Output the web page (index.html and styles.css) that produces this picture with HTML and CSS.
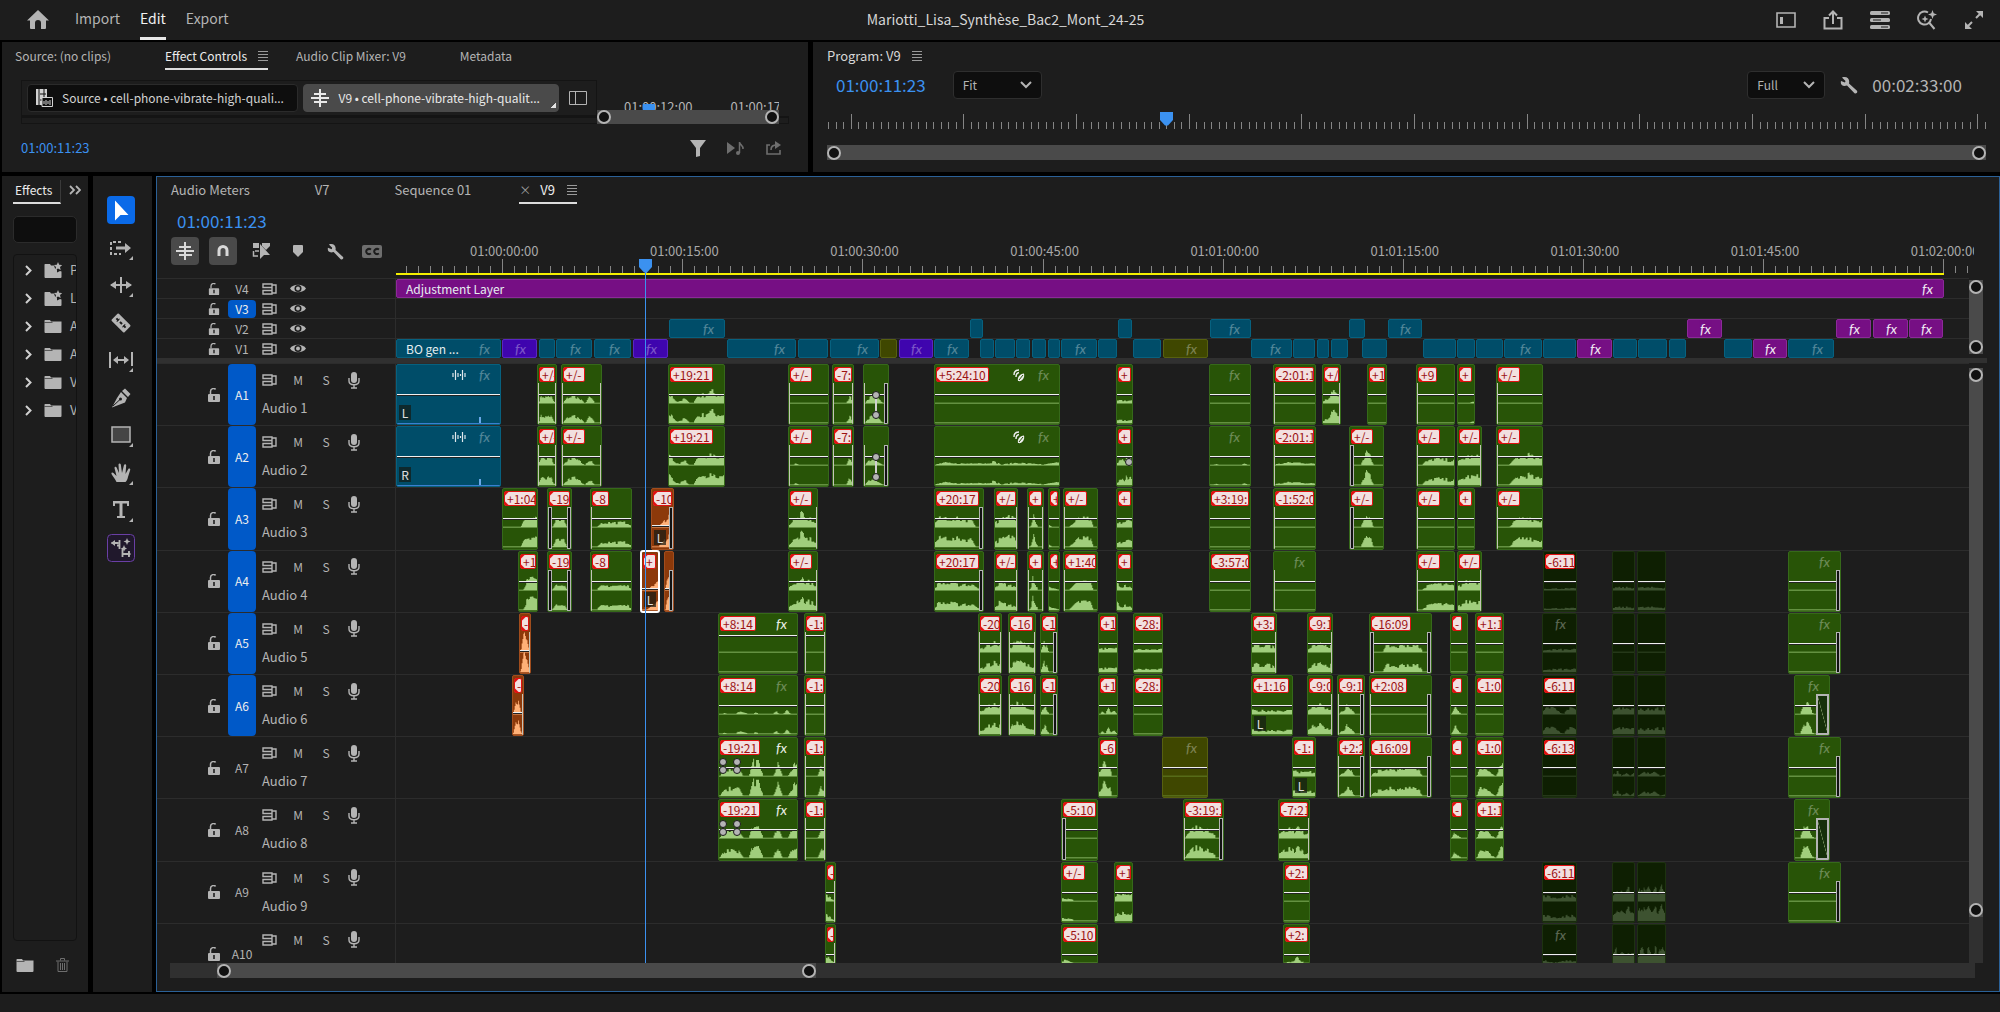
FILE: index.html
```html
<!DOCTYPE html>
<html lang="en">
<head>
<meta charset="utf-8">
<title>Mariotti_Lisa_Synthèse_Bac2_Mont_24-25</title>
<link rel="stylesheet" href="styles.css">
</head>
<body>
<svg class="sprite" aria-hidden="true">
  <symbol id="i-menu" viewBox="0 0 10 10"><path d="M0 .5h10M0 3.5h10M0 6.5h10M0 9.5h10" stroke="currentColor" fill="none"/></symbol>
  <symbol id="i-home" viewBox="0 0 22 20"><path d="M11 0 22 10.500h-3V18a1 1 0 0 1-1 1h-4v-6a3 3 0 0 0-6 0v6H4a1 1 0 0 1-1-1v-7.500H0z" fill="currentColor"/></symbol>
  <symbol id="i-workspace" viewBox="0 0 20 16"><path d="M1 1h18v14H1z" fill="none" stroke="currentColor" stroke-width="1.600"/><path d="M4 5h3v7H4z" fill="currentColor"/></symbol>
  <symbol id="i-share" viewBox="0 0 20 20"><path d="M6 8H1.500v10.500h17V8H14M10 14V2M6 5.500 10 1.500l4 4" fill="none" stroke="currentColor" stroke-width="2"/></symbol>
  <symbol id="i-list" viewBox="0 0 20 18"><rect width="20" height="4" rx="1.500" fill="currentColor"/><rect y="7" width="20" height="4" rx="1.500" fill="currentColor"/><rect y="14" width="20" height="4" rx="1.500" fill="currentColor"/><path d="M11 2h7M3 9h8M11 16h7" stroke="#1d1d1d"/></symbol>
  <symbol id="i-search" viewBox="0 0 20 20"><path d="M11 2.500A6.500 6.500 0 1 0 14 9M12.500 13l5 6" fill="none" stroke="currentColor" stroke-width="2"/><path d="m15.500 0 1.200 3.300L20 4.500l-3.300 1.200L15.500 9l-1.200-3.300L11 4.500l3.300-1.200zM8 5.500 9 8l2.500 1L9 10l-1 2.500L7 10 4.500 9 7 8z" fill="currentColor"/></symbol>
  <symbol id="i-expand" viewBox="0 0 20 20"><path d="M12 8 17 3M8 12l-5 5" fill="none" stroke="currentColor" stroke-width="2"/><path d="M12 1h7v7zM8 19H1v-7z" fill="currentColor"/></symbol>
  <symbol id="i-clip" viewBox="0 0 18 18"><path d="M1 0h11v8H8v8H1z" fill="currentColor"/><path d="M4 0v16M9 0v8M5 5h6M5 11h3" stroke="#0e0e0e"/><path d="M7 8.500h10.500v9H7z" fill="#0e0e0e" stroke="currentColor"/><path d="M9 12v3M11 11v5M13 12v3M15 11v5" stroke="currentColor"/></symbol>
  <symbol id="i-nest" viewBox="0 0 18 18"><path d="M9 0v18M3 5h5M0 9h8M3 13h5M10 5h5M10 9h8M10 13h6" stroke="currentColor" stroke-width="2" fill="none"/></symbol>
  <symbol id="i-panel" viewBox="0 0 18 14"><path d="M.5.500h17v13H.5zM6.500.500v13" fill="none" stroke="currentColor"/></symbol>
  <symbol id="i-funnel" viewBox="0 0 16 17"><path d="M0 0h16L10 8v8l-4 1V8z" fill="currentColor"/></symbol>
  <symbol id="i-playnote" viewBox="0 0 18 14"><path d="M0 1l8 6-8 6z" fill="currentColor"/><path d="M12.500 12V1c0 3 4 3 3.500 7" fill="none" stroke="currentColor" stroke-width="1.500"/><circle cx="11" cy="12" r="2" fill="currentColor"/></symbol>
  <symbol id="i-export" viewBox="0 0 16 14"><path d="M4 4H1v9h13V9M5 9c0-4 2-5 6-5" fill="none" stroke="currentColor" stroke-width="1.600"/><path d="M9 0l6 4-6 4z" fill="currentColor"/></symbol>
  <symbol id="i-wrench" viewBox="0 0 18 18"><path d="M2 1.500 5.500 5 5 6.500 1 5C0 9 3 11 7 9.500l7.500 7.700c1.500 1 3.500-.7 2.500-2.400L9 7.500C10 3 7 0 2 1.500z" fill="currentColor"/></symbol>
  <symbol id="i-chev" viewBox="0 0 12 8"><path d="M1 1l5 5 5-5" fill="none" stroke="currentColor" stroke-width="2"/></symbol>
  <symbol id="i-right" viewBox="0 0 7 11"><path d="M1 1l4.500 4.500L1 10" fill="none" stroke="currentColor" stroke-width="2"/></symbol>
  <symbol id="i-double" viewBox="0 0 12 10"><path d="M1 1l4 4-4 4M7 1l4 4-4 4" fill="none" stroke="currentColor" stroke-width="1.800"/></symbol>
  <symbol id="i-folder" viewBox="0 0 18 14"><path d="M1 1h5l1 1.500h10.500V13a1 1 0 0 1-1 1h-15a1 1 0 0 1-1-1V1.500z" fill="currentColor"/><path d="M.5 3.500h8" stroke="#1d1d1d" stroke-width=".6"/></symbol>
  <symbol id="i-folderstar" viewBox="0 0 18 16"><path d="M1 2h5l1 1.500h3l1 3 2 1v3l3-1.500 1.500.5V15a1 1 0 0 1-1 1h-15a1 1 0 0 1-1-1V2.500z" fill="currentColor"/><path d="M14 0l1.200 2.800 3 .2-2.200 2 .7 3L14 6.400 11.300 8l.7-3-2.200-2 3-.2z" fill="currentColor"/></symbol>
  <symbol id="i-trash" viewBox="0 0 13 14"><path d="M0 3h13M4.500 2.500v-2h4v2M2 3.500v10h9v-10M4.500 5v7M6.500 5v7M8.500 5v7" fill="none" stroke="currentColor"/></symbol>
  <symbol id="i-arrow" viewBox="0 0 28 28"><path d="M8 4.500v20l5.500-5.500H21.500z" fill="#fff"/></symbol>
  <symbol id="i-trackfwd" viewBox="0 0 28 28"><path d="M14 8H4v12h10" fill="none" stroke="currentColor" stroke-width="2" stroke-dasharray="3 2"/><path d="M9 12.500h9V9l6 5-6 5v-3.500H9z" fill="currentColor"/><path d="M26 22v4h-4z" fill="currentColor"/></symbol>
  <symbol id="i-ripple" viewBox="0 0 28 28"><path d="M14 6v16M4 14h20" stroke="currentColor" stroke-width="2"/><path d="M3 14l6-4v8zM25 14l-6-4v8zM26 22v4h-4z" fill="currentColor"/></symbol>
  <symbol id="i-razor" viewBox="0 0 28 28"><g transform="rotate(45 14 14)"><rect x="5" y="9" width="18" height="10" rx="1" fill="currentColor"/><path d="M7.500 14h3m2 0h3m2 0h3" stroke="#1d1d1d" stroke-width="2"/><path d="M10 12v4M18 12v4" stroke="#1d1d1d"/></g></symbol>
  <symbol id="i-slip" viewBox="0 0 28 28"><path d="M3 6v16M25 6v14M7 14h14" stroke="currentColor" stroke-width="2"/><path d="M6 14l5-4v8zM22 14l-5-4v8zM26 22v4h-4z" fill="currentColor"/></symbol>
  <symbol id="i-pen" viewBox="0 0 28 28"><path d="M18 4.500 23.500 10l-2.500 3-6-6zM14 8l6 6-2 4.500-13 5L10 14z" fill="currentColor"/><path d="M6 22l7-6.500" stroke="#1d1d1d"/><circle cx="13.500" cy="15" r="1.500" fill="#1d1d1d"/></symbol>
  <symbol id="i-rect" viewBox="0 0 28 28"><path d="M5 6h18v15H5z" fill="#454545" stroke="currentColor" stroke-width="1.500"/><path d="M26 22v4h-4z" fill="currentColor"/></symbol>
  <symbol id="i-hand" viewBox="0 0 28 28"><path d="M9.500 23C8 20 6 17.500 4.500 15c-.5-1.500 1-2 2-1l3 3L7.500 9c0-1.500 1.700-1.700 2.200-.3L12 14l-.5-8.500c.2-1.400 2-1.400 2.300 0L15 14l2-8c.5-1.200 2.200-.9 2.200.5L18.500 15l2.800-5c.9-1 2.300-.3 1.900 1L21 18c-.7 3-1.500 4-2.500 5z" fill="currentColor"/><path d="M26 22v4h-4z" fill="currentColor"/></symbol>
  <symbol id="i-type" viewBox="0 0 28 28"><path d="M6 5h16v5h-2V7.500h-4.500V20H18v2h-8v-2h2.500V7.500H8V10H6z" fill="currentColor"/><path d="M26 22v4h-4z" fill="currentColor"/></symbol>
  <symbol id="i-remix" viewBox="0 0 28 28"><rect x=".5" y=".5" width="27" height="27" rx="4" fill="#20182c" stroke="#6a3fa5"/><path d="M4.500 9h7M12.500 6v9M15.500 14v9M10 11.500h3M16 20h6M22 17v6" stroke="currentColor" stroke-width="1.800"/><path d="M4 9l4-3v6zM24 20l-3-3v6zM20 4l1 2.500 2.500 1L21 8.500 20 11l-1-2.500-2.500-1 2.500-1zM17 11l1 2.500 2 1-2 1-1 2-1-2-2-1 2-1z" fill="currentColor"/></symbol>
  <symbol id="i-magnet" viewBox="0 0 18 18"><path d="M5 14V8.500a4 4 0 0 1 8 0V14" fill="none" stroke="currentColor" stroke-width="3"/></symbol>
  <symbol id="i-linked" viewBox="0 0 18 18"><path d="M1 1h6v5H1zM10 1h8v3l-4 4-4-4z" fill="currentColor"/><path d="M1.500 9v5H6M3 9h4" fill="none" stroke="currentColor" stroke-width="1.500"/><path d="M8 2v15l4-4h6z" fill="currentColor"/></symbol>
  <symbol id="i-marker" viewBox="0 0 10 12"><path d="M0 1a1 1 0 0 1 1-1h8a1 1 0 0 1 1 1v6l-5 5-5-5z" fill="currentColor"/></symbol>
  <symbol id="i-cc" viewBox="0 0 20 13"><rect width="20" height="13" rx="2" fill="currentColor"/><path d="M9 4.500a3 2.500 0 1 0 0 4M17 4.500a3 2.500 0 1 0 0 4" fill="none" stroke="#1d1d1d" stroke-width="2"/></symbol>
  <symbol id="i-lock" viewBox="0 0 12 14"><rect y="6" width="12" height="8" rx="1" fill="currentColor"/><path d="M2.500 6V3.500C2.500 0 7 0 7.500 1.500" fill="none" stroke="currentColor" stroke-width="1.500"/><path d="M6 8v4" stroke="#1d1d1d" stroke-width="1.600"/></symbol>
  <symbol id="i-sync" viewBox="0 0 15 12"><path d="M1 1h9v3.500H1zM1 7.500h9V11H1zM10 2h4v8h-4M10 4.500v3" fill="none" stroke="currentColor" stroke-width="1.400"/></symbol>
  <symbol id="i-eye" viewBox="0 0 16 11"><path d="M0 5.500C3 .5 13 .5 16 5.500 13 10.500 3 10.500 0 5.500z" fill="currentColor"/><circle cx="8" cy="5.500" r="3.500" fill="#1d1d1d"/><circle cx="8" cy="5.500" r="2" fill="currentColor"/></symbol>
  <symbol id="i-mic" viewBox="0 0 12 17"><rect x="3" width="6" height="11" rx="3" fill="currentColor"/><path d="M1 6v3c0 5 10 5 10 0V6M6 13v3M3 16h6" fill="none" stroke="currentColor" stroke-width="1.400"/></symbol>
  <symbol id="i-head" viewBox="0 0 13 15"><path d="M0 1h13v8l-5 5.500H5L0 9z" fill="#3b91f0"/></symbol>
  <symbol id="i-wave" viewBox="0 0 14 12"><path d="M1 4v4M3.500 1v10M6 4v4M8.500 5v2M10.500 1v10M13 4v4" stroke="#dfe8ec" stroke-width="1.200"/></symbol>
  <symbol id="i-leaf" viewBox="0 0 12 13"><path d="M5 12C4 8 7 5 11 4.500 12 9 9 13 5 12z" fill="#eee"/><path d="M6 11l4-5" stroke="#285407"/><path d="M1 6c0-3 2-5 5-5M3 8c0-3 1-4 3-4.500" fill="none" stroke="#eee" stroke-width="1.400"/></symbol>
</svg>

<header class="app-bar">
  <nav class="app-nav">
    <button class="icon-btn" aria-label="Home"><svg width="22" height="20"><use href="#i-home"/></svg></button>
    <a href="#import">Import</a><a href="#edit" class="on">Edit</a><a href="#export">Export</a>
  </nav>
  <h1>Mariotti_Lisa_Synthèse_Bac2_Mont_24-25</h1>
  <div class="app-tools">
    <button class="icon-btn" aria-label="Workspaces"><svg width="20" height="16"><use href="#i-workspace"/></svg></button>
    <button class="icon-btn" aria-label="Quick export"><svg width="20" height="20"><use href="#i-share"/></svg></button>
    <button class="icon-btn" aria-label="Progress"><svg width="20" height="18"><use href="#i-list"/></svg></button>
    <button class="icon-btn" aria-label="Search"><svg width="20" height="20"><use href="#i-search"/></svg></button>
    <button class="icon-btn" aria-label="Full screen"><svg width="20" height="20"><use href="#i-expand"/></svg></button>
  </div>
</header>

<main>
  <div class="upper">
    <section class="panel controls">
      <nav class="tabs controls-tabs">
        <a href="#source">Source: (no clips)</a>
        <a href="#effects" class="on">Effect Controls <svg width="10" height="10"><use href="#i-menu"/></svg></a>
        <a href="#mixer">Audio Clip Mixer: V9</a>
        <a href="#metadata">Metadata</a>
      </nav>
      <div class="clip-head">
        <div class="clip-pick">
          <button class="pick"><svg width="18" height="18"><use href="#i-clip"/></svg>Source • cell-phone-vibrate-high-quali...</button>
          <button class="pick on"><svg width="18" height="18"><use href="#i-nest"/></svg>V9 • cell-phone-vibrate-high-qualit...</button>
          <button class="icon-btn" aria-label="Toggle timeline"><svg width="18" height="14"><use href="#i-panel"/></svg></button>
        </div>
        <div class="mini-ruler">
          <div class="mini-times"><span>01:00:12:00</span><span>01:00:17:00</span><i></i></div>
          <div class="zoombar"><i></i><i></i></div>
        </div>
        <div class="strip"></div>
      </div>
      <div class="controls-foot">
        <span class="tc small">01:00:11:23</span>
        <button class="icon-btn" aria-label="Filter"><svg width="16" height="17"><use href="#i-funnel"/></svg></button>
        <button class="icon-btn dim" aria-label="Play audio only"><svg width="18" height="14"><use href="#i-playnote"/></svg></button>
        <button class="icon-btn dim" aria-label="Export clip"><svg width="16" height="14"><use href="#i-export"/></svg></button>
      </div>
    </section>

    <section class="panel program">
      <nav class="tabs"><a href="#program" class="bright">Program: V9 <svg width="10" height="10"><use href="#i-menu"/></svg></a></nav>
      <div class="program-row">
        <span class="tc">01:00:11:23</span>
        <span class="drop fit"><select aria-label="Zoom level"><option>Fit</option></select><svg width="12" height="8"><use href="#i-chev"/></svg></span>
        <span class="drop full"><select aria-label="Playback resolution"><option>Full</option></select><svg width="12" height="8"><use href="#i-chev"/></svg></span>
        <button class="icon-btn" aria-label="Settings"><svg width="18" height="18"><use href="#i-wrench"/></svg></button>
        <span class="tc grey">00:02:33:00</span>
      </div>
      <div class="program-ruler" id="program-ruler"><svg class="head" width="13" height="15"><use href="#i-head"/></svg></div>
      <div class="zoombar"><i></i><i></i></div>
    </section>
  </div>

  <div class="lower">
    <section class="panel effects">
      <nav class="effects-tabs"><a href="#fx">Effects</a><button class="icon-btn" aria-label="More panels"><svg width="12" height="10"><use href="#i-double"/></svg></button></nav>
      <input class="search" type="text" aria-label="Search effects">
      <ul class="bins">
        <li><svg width="7" height="11"><use href="#i-right"/></svg><svg width="18" height="16"><use href="#i-folderstar"/></svg>Presets</li>
        <li><svg width="7" height="11"><use href="#i-right"/></svg><svg width="18" height="16"><use href="#i-folderstar"/></svg>Lumetri Presets</li>
        <li><svg width="7" height="11"><use href="#i-right"/></svg><svg width="18" height="14"><use href="#i-folder"/></svg>Audio Effects</li>
        <li><svg width="7" height="11"><use href="#i-right"/></svg><svg width="18" height="14"><use href="#i-folder"/></svg>Audio Transitions</li>
        <li><svg width="7" height="11"><use href="#i-right"/></svg><svg width="18" height="14"><use href="#i-folder"/></svg>Video Effects</li>
        <li><svg width="7" height="11"><use href="#i-right"/></svg><svg width="18" height="14"><use href="#i-folder"/></svg>Video Transitions</li>
      </ul>
      <div class="effects-foot">
        <button class="icon-btn" aria-label="New bin"><svg width="18" height="14"><use href="#i-folder"/></svg></button>
        <button class="icon-btn dim" aria-label="Delete"><svg width="13" height="14"><use href="#i-trash"/></svg></button>
      </div>
    </section>

    <section class="panel tools">
      <div class="tool-list">
        <button class="tool on" aria-label="Selection"><svg><use href="#i-arrow"/></svg></button>
        <button class="tool" aria-label="Track select forward"><svg><use href="#i-trackfwd"/></svg></button>
        <button class="tool" aria-label="Ripple edit"><svg><use href="#i-ripple"/></svg></button>
        <button class="tool" aria-label="Razor"><svg><use href="#i-razor"/></svg></button>
        <button class="tool" aria-label="Slip"><svg><use href="#i-slip"/></svg></button>
        <button class="tool" aria-label="Pen"><svg><use href="#i-pen"/></svg></button>
        <button class="tool" aria-label="Rectangle"><svg><use href="#i-rect"/></svg></button>
        <button class="tool" aria-label="Hand"><svg><use href="#i-hand"/></svg></button>
        <button class="tool" aria-label="Type"><svg><use href="#i-type"/></svg></button>
        <button class="tool" aria-label="Generative extend"><svg><use href="#i-remix"/></svg></button>
      </div>
    </section>

    <section class="panel timeline">
      <nav class="tabs timeline-tabs">
        <a href="#meters">Audio Meters</a>
        <a href="#v7">V7</a>
        <a href="#seq1">Sequence 01</a>
        <a href="#v9" class="on"><span class="close">×</span> V9 <svg width="10" height="10"><use href="#i-menu"/></svg></a>
      </nav>
      <div class="sequence">
        <div class="seq-top">
          <div class="seq-tools">
            <span class="tc">01:00:11:23</span>
            <div class="toggles">
              <button class="toggle on" aria-label="Nest"><svg width="18" height="18"><use href="#i-nest"/></svg></button>
              <button class="toggle on" aria-label="Snap"><svg width="18" height="18"><use href="#i-magnet"/></svg></button>
              <button class="toggle" aria-label="Linked selection"><svg width="18" height="18"><use href="#i-linked"/></svg></button>
              <button class="toggle" aria-label="Add marker"><svg width="10" height="12"><use href="#i-marker"/></svg></button>
              <button class="toggle" aria-label="Timeline settings"><svg width="17" height="17"><use href="#i-wrench"/></svg></button>
              <button class="toggle dim" aria-label="Captions"><svg width="20" height="13"><use href="#i-cc"/></svg></button>
            </div>
          </div>
          <div class="ruler"><div class="ruler-scale" id="ruler"></div></div>
        </div>
        <div class="group video">
          <div class="tracks" id="video"></div>
          <div class="vbar"><i></i><i></i></div>
        </div>
        <div class="divider"></div>
        <div class="group audio">
          <div class="tracks" id="audio"></div>
          <div class="vbar long"><div class="thumb"><i></i><i></i></div></div>
        </div>
        <div class="overlay"><div class="playhead" id="playhead"><svg width="13" height="15"><use href="#i-head"/></svg></div></div>
      </div>
      <div class="hbar"><div class="zoombar"><i></i><i></i></div></div>
    </section>
  </div>
</main>
<footer class="status"></footer>
<script src="app.js"></script>
</body>
</html>
```
FILE: styles.css
```css
* { box-sizing: border-box; }
html, body { height: 100%; }
body {
  margin: 0;
  background: #000;
  color: #b4b4b4;
  font: 13px/16px "Noto Sans CJK JP", "Open Sans", sans-serif;
  display: flex;
  flex-direction: column;
  gap: 2px;
  overflow: hidden;
}
button, select, input { font: inherit; color: inherit; margin: 0; }
button { border: 0; background: none; padding: 0; }
a { color: inherit; text-decoration: none; }
svg { display: block; flex: none; }
.sprite { position: absolute; width: 0; height: 0; }
.icon-btn { display: grid; place-items: center; }
.dim { color: #6e6e6e; }

.app-bar {
  flex: none;
  height: 40px;
  background: #1d1d1d;
  display: grid;
  grid-template-columns: 1fr auto 1fr;
  align-items: stretch;
  padding: 0 16px 0 27px;
  font-size: 14px;
}
.app-nav { display: flex; gap: 20px; }
.app-nav .icon-btn { width: 22px; margin-right: 6px; }
.app-nav a { line-height: 37px; border-bottom: 3px solid transparent; }
.app-nav a.on { color: #f2f2f2; border-color: #e6e6e6; }
.app-bar h1 { margin: 0; font-size: 14px; font-weight: 400; line-height: 39px; color: #d6d6d6; }
.app-tools { display: flex; justify-content: flex-end; gap: 27px; }

main { flex: 1; min-height: 0; display: flex; flex-direction: column; gap: 4px; }
.panel { background: #1d1d1d; min-width: 0; }
.upper { flex: none; display: grid; grid-template-columns: 806fr 1187fr; gap: 5px; padding-left: 2px; height: 130px; }
.tabs { display: flex; align-items: flex-start; }
.tabs a { display: flex; align-items: center; gap: 11px; line-height: 24px; border-bottom: 2px solid transparent; white-space: nowrap; }
.tabs a.on { color: #ececec; border-color: #dcdcdc; }
.tabs a.bright { color: #d6d6d6; }
.tabs svg { color: #9a9a9a; }

.controls { padding: 2px 19px 0; }
.controls-tabs { margin-left: -6px; height: 36px; gap: 54px; font-size: 12px; }
.controls-tabs a:nth-child(2) { margin-right: -26px; }
.clip-head { display: grid; grid-template-columns: 576px minmax(0, 1fr) 10px; grid-template-rows: 36px 8px; }
.clip-pick { grid-area: 1 / 1; border: 1px solid #141414; display: flex; align-items: center; gap: 5px; padding: 0 9px 0 5px; }
.pick {
  height: 28px;
  width: 272px;
  border-radius: 4px;
  background: #0e0e0e;
  border: 1px solid #2b2b2b;
  color: #d2d2d2;
  display: flex;
  align-items: center;
  gap: 9px;
  padding-left: 7px;
  white-space: nowrap;
  font-size: 12px;
}
.pick.on { width: 256px; background: linear-gradient(135deg, transparent 50%, #e2e2e2 50%) no-repeat right 2px bottom 3px / 6px 6px #4a4a4a; border-color: #4a4a4a; color: #e8e8e8; }
.clip-pick .icon-btn { margin-left: 5px; }
.mini-ruler { grid-area: 1 / 2 / 3 / 3; z-index: 1; }
.mini-times { position: relative; height: 30px; padding: 19px 0 0 27px; display: flex; gap: 38px; overflow: hidden; font-size: 13px; }
.mini-times i { position: absolute; left: 46px; bottom: 0; width: 12px; height: 6px; background: #3b91f0; }
.strip { grid-area: 2 / 1 / 3 / 4; border: 1px solid #141414; border-top-width: 2px; }
.zoombar { height: 14px; background: #4a4a4a; display: flex; justify-content: space-between; align-items: center; }
.zoombar i, .vbar i { width: 14px; height: 14px; border-radius: 50%; background: #111; border: 2px solid #b4b4b4; flex: none; }
.controls-foot { display: flex; align-items: center; gap: 21px; margin-top: 15px; padding-right: 7px; height: 18px; }
.controls-foot .tc { margin-right: auto; }
.tc { color: #3b91f0; font-size: 17px; line-height: 20px; }
.tc.small { font-size: 13px; }
.tc.grey { color: #b4b4b4; }

.program { padding: 2px 14px 0; }
.program-row { display: flex; align-items: center; height: 30px; padding: 0 24px 0 9px; }
.drop { position: relative; display: flex; align-items: center; }
.drop select { appearance: none; width: 100%; height: 28px; border: 1px solid #2e2e2e; border-radius: 4px; background: #0e0e0e; padding: 0 9px; font-size: 12px; line-height: 16px; }
.drop svg { position: absolute; right: 10px; pointer-events: none; }
.fit { width: 89px; margin-left: 27px; margin-right: auto; }
.full { width: 78px; margin-right: 15px; }
.program-row .icon-btn { margin-right: 14px; }
.program-ruler { position: relative; height: 29px; margin-bottom: 16px; }
.program-ruler .head { position: absolute; left: 28.700%; top: 11px; }
.program-ruler b, .ruler b { position: absolute; bottom: 0; width: 1px; height: 7px; background: #858585; }
.program-ruler b.major { height: 15px; }
.program .zoombar { height: 15px; }

.lower { flex: 1; min-height: 0; display: grid; grid-template-columns: 86px 59px 1fr; gap: 5px; padding-left: 2px; }
.lower .timeline { margin-left: -1px; }
.effects { display: flex; flex-direction: column; padding: 4px 11px 0; }
.effects-tabs { display: flex; gap: 8px; height: 36px; font-size: 12px; }
.effects-tabs a { height: 24px; line-height: 20px; color: #ececec; border-bottom: 2px solid #dcdcdc; border-right: 1px solid #3a3a3a; padding: 0 8px 0 2px; }
.effects-tabs .icon-btn { height: 20px; }
.search { width: 64px; height: 27px; background: #0e0e0e; border: 1px solid #2b2b2b; border-radius: 5px; flex: none; }
.bins { list-style: none; margin: 11px 0 0; padding: 1px 0 0 11px; width: 64px; flex: 1; border: 1px solid #121212; border-radius: 4px; overflow: hidden; }
.bins li { display: flex; align-items: center; height: 28px; white-space: nowrap; }
.bins li svg:nth-child(2) { margin: 0 8px 0 12px; }
.bins li svg:first-child { color: #d0d0d0; }
.effects-foot { display: flex; justify-content: space-between; height: 51px; padding: 17px 8px 0 3px; align-items: flex-start; }

.tools { padding: 20px 17px 0 14px; }
.tool-list { display: flex; flex-direction: column; justify-content: space-between; align-items: center; height: 366px; }
.tool { width: 28px; height: 28px; border-radius: 4px; }
.tool svg { width: 28px; height: 28px; }
.tool.on { background: #0a6ae8; }

.timeline { border: 1px solid #2b6197; display: flex; flex-direction: column; overflow: hidden; }
.timeline-tabs { height: 28px; padding: 1px 0 0 14px; gap: 65px; }
.timeline-tabs a.on { gap: 12px; margin-left: -17px; }
.timeline-tabs .close { color: #9a9a9a; font-size: 12px; margin-right: -3px; }
.sequence { position: relative; flex: 1; min-height: 0; display: flex; flex-direction: column; }
.seq-top { flex: none; display: grid; grid-template-columns: 239px 1fr; height: 73px; }
.seq-tools { padding: 6px 0 0 20px; }
.seq-tools .tc { display: block; }
.toggles { display: flex; gap: 10px; margin: 6px 0 0 -6px; }
.toggle { width: 28px; height: 28px; border-radius: 4px; display: grid; place-items: center; flex: none; }
.toggle.on { background: #4a4a4a; color: #d8d8d8; }
.toggle:nth-child(n+3) { margin-right: -1px; }
.ruler { overflow: hidden; margin-right: 25px; position: relative; }
.ruler-scale { position: relative; height: 68px; margin-right: 5px; }
.ruler-scale b.major { height: 14px; }
.ruler-scale span { position: absolute; bottom: 14px; transform: translateX(-50%); color: #a8a8a8; white-space: nowrap; }
.ruler-scale em { position: absolute; bottom: -2px; left: 0; height: 2px; background: #f4f000; }

.group { display: grid; grid-template-columns: 1fr 14px; padding-right: 16px; flex: none; }
.audio { flex: 1; min-height: 0; overflow: hidden; }
.divider { flex: none; height: 5px; background: #303030; margin-right: 12px; }
#audio { display: grid; grid-template-rows: repeat(10, 1fr); height: 622px; }
.track { display: grid; grid-template-columns: 239px 1fr; border-top: 1px solid #2c2c2c; min-height: 0; }
.video .track { height: 20px; }
.heads { display: grid; border-right: 1px solid #2c2c2c; }
.video .heads { grid-template-columns: 51px 12px 8px 28px 6px 15px 13px 16px; align-items: center; }
.video .heads > :nth-child(1) { grid-column: 2; }
.video .heads > :nth-child(2) { grid-column: 4; }
.video .heads > :nth-child(3) { grid-column: 6; }
.video .heads > :nth-child(4) { grid-column: 8; }
.target { border-radius: 4px; font-size: 12px; line-height: 18px; }
.target.on { background: #0059c8; color: #eee; }
.audio .heads { grid-template-columns: 51px 12px 8px 28px 6px 1fr; align-items: center; }
.audio .heads .lock { grid-column: 2; }
.audio .heads .target { grid-column: 4; height: 100%; }
.audio .info { grid-column: 6; align-self: start; padding-top: 7px; }
.audio .row { display: grid; grid-template-columns: 15px 28px 28px 28px; justify-items: center; align-items: center; height: 18px; }
.audio .row > :nth-child(n+2) { margin-left: 14px; }
.audio .name { margin-top: 11px; }
.ms { font-size: 12px; line-height: 14px; }

.lane { position: relative; }
.clip { position: absolute; top: 0; bottom: 0; border-radius: 2px; border: 1px solid; overflow: hidden; }
.clip.b { background: #004d69; border-color: #07617f; }
.clip.v { background: #3f05ae; border-color: #5a25c4; }
.clip.p { background: #760f84; border-color: #8c2a99; }
.clip.y { background: #3f4700; border-color: #57600f; }
.clip.g { background: #285407; border-color: #36691a; --wave: #a0ce7c; }
.clip.d { background: #0e1f02; border-color: #1d3210; --wave: #3d5230; }
.clip.o { background: #8c390a; border-color: #a14d1d; --wave: #ffb077; }
.audio .clip.y { --wave: #6f9030; }
.clip.picked { outline: 2px solid #fff; outline-offset: -1px; }
.clip .fx { position: absolute; right: 10px; top: 1px; font: italic 14px/16px Lato, sans-serif; color: #fff; opacity: .32; }
.audio .clip .fx { top: 2px; }
.clip .fx.hot { opacity: .9; }
.clip .title { position: absolute; left: 9px; top: 0; font-size: 12px; line-height: 17px; color: #e6eef0; white-space: nowrap; }
.clip .tag {
  position: absolute;
  left: 1px;
  top: 2px;
  max-width: calc(100% - 2px);
  height: 15px;
  line-height: 13px;
  font-size: 12px;
  padding: 0 2px;
  overflow: hidden;
  white-space: nowrap;
  color: #9c1313;
  border: 1px solid #e01010;
  border-radius: 2px;
  background:
    linear-gradient(135deg, #e01010 2px, transparent 3px),
    linear-gradient(45deg, #e01010 2px, transparent 3px),
    #f2e0e0;
}
.clip .wave { position: absolute; inset: 0; width: 100%; height: 100%; }
.clip .wave path { fill: var(--wave); }
.clip .vol { position: absolute; left: 0; right: 0; height: 2px; background: #f0f0f0; border-bottom: 1px solid #222; }
.clip .edge { position: absolute; top: 18px; bottom: 0; width: 1px; background: #c4c4b8; }
.clip .edge.wide { width: 4px; border: 1px solid #b4b4b4; background: #111; }
.clip .edge.fade { width: 13px; border-width: 2px; background: linear-gradient(75deg, transparent 48%, #789060 50%, transparent 54%) #16300a; }
.clip .left { left: 0; }
.clip .right { right: 0; }
.clip .badge { position: absolute; left: 2px; bottom: 4px; width: 12px; height: 15px; background: rgba(20, 25, 20, .7); color: #e0e0e0; font-size: 12px; line-height: 15px; text-align: center; }
.clip .key { position: absolute; width: 8px; height: 8px; border-radius: 50%; background: #b4b4b4; border: 1px solid #1a1a1a; }
.clip .stem { position: absolute; width: 2px; background: #d0d0d0; }
.clip .glyph { position: absolute; top: 4px; }
.clip .spike { position: absolute; bottom: 0; width: 2px; height: 7px; background: #6aa8e8; }
.clip .base { position: absolute; left: 0; right: 0; bottom: 0; height: 1px; background: #3b7fd0; }

.vbar { background: #4a4a4a; display: flex; flex-direction: column; justify-content: space-between; margin: 2px 0 4px; }
.vbar.long { background: #303030; margin: 5px 0 5px; }
.vbar .thumb { background: #4a4a4a; height: 549px; display: flex; flex-direction: column; justify-content: space-between; }
.overlay { position: absolute; inset: 0 30px 0 239px; pointer-events: none; }
.playhead { position: absolute; top: 53px; bottom: 0; width: 13px; margin-left: -6px; }
.playhead::after { content: ""; position: absolute; left: 6px; top: 10px; bottom: 0; width: 1px; background: #3b91f0; }
.hbar { flex: none; height: 15px; margin: 0 24px 13px 13px; background: #303030; display: flex; }
.hbar .zoombar { margin-left: 2.600%; width: 33.200%; height: 15px; }
.status { flex: none; height: 18px; background: #1d1d1d; }
```
FILE: app.js
```js
// One timeline unit is one pixel of lane at 100% zoom; the lane shows 1573 units from ORIGIN.
const ORIGIN = 396, SPAN = 1573;
const pct = (x, span = SPAN) => (x / span * 100).toFixed(3) + '%';
const icon = (id, w, h) => `<svg width="${w}" height="${h}"><use href="#i-${id}"/></svg>`;

// Video clips: start end colour fx(- none, f dim, F bright) title
const VIDEO = {
  V4: ['396 1944 p F Adjustment Layer'],
  V3: [],
  V2: ['669 725 b f', '970 983 b -', '1118 1132 b -', '1210 1251 b f', '1349 1365 b -', '1388 1422 b f',
    '1687 1722 p F', '1836 1871 p F', '1873 1908 p F', '1909 1943 p F'],
  V1: ['396 501 b f BO gen ...', '502 537 v f', '539 555 b -', '556 592 b f', '594 631 b f', '633 668 v f',
    '727 796 b f', '798 828 b -', '830 879 b f', '880 897 y -', '899 933 v f', '934 969 b f', '980 994 b -',
    '995 1015 b -', '1016 1030 b -', '1032 1046 b -', '1048 1060 b -', '1061 1097 b f', '1098 1117 b -',
    '1133 1161 b -', '1163 1208 y f', '1251 1292 b f', '1293 1315 b -', '1317 1329 b -', '1331 1348 b -',
    '1362 1387 b -', '1423 1456 b -', '1457 1475 b -', '1476 1503 b -', '1504 1542 b f', '1543 1576 b -',
    '1577 1612 p F', '1613 1637 b -', '1638 1667 b -', '1669 1686 b -', '1724 1752 b -', '1753 1787 p F', '1788 1834 b f']
};

// Audio clips: start end colour tag fx envelope(base 36 heights) flags
// flags: l/r thin edge, L/R wide edge, X fade, b badge, s selected, t empty tag, k/K/q keyframes, h high volume line, n leaf glyph
const AUDIO = [
  ['396 501 b - f 0 w', '537 557 g +/- - 17868720 lr', '561 602 g +/- - 0477853065100 lr', '668 725 g +19:21 - 9623510789cc999 ',
    '788 829 g +/- - 0000010 l', '832 854 g -7: - 0000181 lr', '863 889 g - - 0576300 lRk', '934 1060 g +5:24:10 f 11111111 n',
    '1116 1133 g + - 3333 ', '1209 1251 g - f 1111 ', '1273 1316 g -2:01:1 - 1111 l', '1322 1341 g +/- - 3457fa88 r',
    '1367 1387 g +1 - 1111 ', '1416 1455 g +9 - 0101 l', '1457 1475 g + - 0012 ', '1496 1543 g +/- - 0000 l'],
  ['396 501 b - f 0 w', '537 557 g +/- - 17868720 lr', '561 602 g +/- - 0477853065100 lr', '668 725 g +19:21 - 9623510789cc999 ',
    '788 829 g +/- - 0200000 l', '832 854 g -7: - 0000181 lr', '863 889 g - - 0576300 lRk', '934 1060 g - f 1322232412322123 n',
    '1116 1133 g + - 35749586 q', '1209 1251 g - f 02000020 ', '1273 1316 g -2:01:1 - 1233322 l', '1349 1384 g +/- - 00008gc0000 L',
    '1416 1455 g +/- - 0045776655 l', '1457 1482 g +/- - 479999 r', '1496 1543 g +/- - 0002799b877 l'],
  ['502 538 g +1:04 - 000009bba ', '547 572 g -19 - 0077700 LR', '590 632 g -8 - 0045555553 l', '651 674 o -10 - 005cg bR',
    '788 818 g +/- - 379e9972 r', '934 984 g +20:17 - 69aa9899888100 R', '994 1018 g +/- - 589bba r', '1027 1044 g + - 02f6000 lr',
    '1048 1060 g + - 3000 ', '1063 1098 g +/- - 0036999900 l', '1116 1133 g + - 45676 ', '1209 1251 g +3:19: - 0 ', '1273 1316 g -1:52:0 - 0 l',
    '1349 1384 g +/- - 00008gc0000 L', '1416 1455 g +/- - 0 l', '1457 1475 g + - 0 ', '1496 1543 g +/- - 0002799b877 l'],
  ['518 538 g +1 - 00acca ', '547 572 g -19 - 0077700 LR', '590 632 g -8 - 0045555553 l', '641 659 o + - 00579 bs', '664 674 o - - 0ea00 R',
    '788 818 g +/- - 379e9972 r', '934 984 g +20:17 - 48877766757321 R', '994 1018 g +/- - 4876553 r', '1027 1044 g + - 02f6000 lr',
    '1048 1060 g + - 4221 ', '1063 1098 g +1:40 - 0036999900 l', '1116 1133 g + - 83542 ', '1209 1251 g -3:57:0 - 1111 ', '1273 1316 g - f 0 l',
    '1416 1455 g +/- - 0045776655 l', '1457 1482 g +/- - 479999 r', '1543 1577 d -6:11 - 2222 ', '1612 1635 d - - 3333 ', '1637 1666 d - - 3333 ', '1788 1841 g - f 1111 R'],
  ['519 531 o - - 0fi80 rt', '718 798 g +8:14 F 01111 h', '804 826 g -1: - 0000 hlr', '978 1002 g -20 - 3599a97 lr', '1008 1036 g -16 - 3aec9753 lr',
    '1040 1058 g -12 - 3a60000 R', '1098 1118 g +1 - 4444 ', '1133 1163 g -28: - 3333 ', '1251 1277 g +3: - 78779763 r', '1307 1333 g -9:1 - 58ab777 r',
    '1369 1432 g -16:09 - 0011776688777000 LR', '1450 1468 g - - 1 t', '1475 1504 g +1:1 - 1 ', '1542 1577 d - f 23333 ', '1612 1635 d - - 0 ', '1637 1666 d - - 0 ', '1788 1841 g - f 0 R'],
  ['512 524 o - - 2he30 rt', '718 798 g +8:14 f 0200420200030400 ', '804 826 g -1: - 0 lr', '978 1002 g -20 - 3599a97 lr', '1008 1036 g -16 - 3aec9753 lr',
    '1040 1058 g -12 - 3a60000 R', '1098 1118 g +1 - 0316240 ', '1133 1163 g -28: - 0101010 ', '1251 1293 g +1:16 - 4444444 b', '1307 1333 g -9:0 - 58ab666 r',
    '1337 1365 g -9:1 - 0349830000 lR', '1369 1432 g +2:08 - 0 lR', '1450 1468 g - - 08200 t', '1475 1504 g -1:0 - 0101010 ', '1542 1577 d -6:11 - 477521664 ',
    '1612 1635 d - - 6666 ', '1637 1666 d - - 5566 ', '1794 1830 g - f 00ac20000 X'],
  ['718 798 g -19:21 F 0788700ff000e009f K', '804 826 g -1: - 0000b3 lr', '1098 1118 g -6 - 68f7a000 ', '1162 1208 y - f 1 ', '1292 1316 g -1: - 555 b',
    '1337 1365 g +2:2 - 0349830000 lR', '1369 1432 g -16:09 - 0466887688877000 lR', '1450 1468 g - - 0 t', '1475 1504 g -1:0 - 0876309c ', '1542 1577 d -6:13 - 1 ',
    '1612 1635 d - - 251414 ', '1637 1666 d - - 253412 ', '1788 1841 g - f 00001 R'],
  ['718 798 g -19:21 F 0788700ff000e009f K', '804 826 g -1: - 0000b3 lr', '1061 1098 g -5:10 - 0 L', '1183 1224 g -3:19:1 - 058bba988000 lR', '1278 1310 g -7:21 - 679a7c855 r',
    '1450 1468 g - - 07200 t', '1475 1504 g +1:1 - 0876309c ', '1794 1830 g - f 00ac20000 X'],
  ['825 836 g - - 740 rt', '1061 1098 g +/- - 3310000 ', '1114 1133 g +1 - 7989a ', '1283 1310 g +2: - 1 ', '1542 1577 d -6:11 - 66434665 ',
    '1612 1635 d - - 9e9c9e99 ', '1637 1666 d - - 9gaf9gah9 ', '1788 1841 g - f 1 R'],
  ['825 836 g - - 740 rt', '1061 1098 g -5:10 - 3310000 ', '1283 1310 g +2: - 0226300 ', '1542 1577 d - f 3132 ',
    '1612 1635 d - - 9e9c9e99 ', '1637 1666 d - - 9gaf9gah9 ']
];

let seed = 7;
const noise = () => (seed = (seed * 16807) % 2147483647) / 2147483647;

function wave(env, w) {
  const peaks = [...env].map(c => parseInt(c, 36) || 0);
  const tops = [];
  let jitter = 1;
  for (let x = 0; x < w; x++) {
    const pos = x / w * (peaks.length - 1);
    const a = peaks[Math.floor(pos)], b = peaks[Math.ceil(pos)];
    const mid = a + (b - a) * (pos % 1);
    if (x % 2 === 0) jitter = 0.65 + noise() * 0.6;
    tops.push(mid > 1.2 ? Math.max(1, mid * jitter) : 0.7);
  }
  const draw = base => `M0 ${base}` + tops.map((t, x) => `V${(base - t).toFixed(1)}H${x + 1}`).join('') + `V${base}z`;
  return `<svg class="wave" viewBox="0 0 ${w} 60" preserveAspectRatio="none"><path d="${draw(39)}"/><path d="${draw(59)}"/></svg>`;
}

const place = (x1, x2) => `style="left:${pct(x1 - ORIGIN)};width:${pct(x2 - x1)}"`;
const fxMark = f => f === '-' ? '' : `<span class="fx${f === 'F' ? ' hot' : ''}">fx</span>`;

function videoClip(line) {
  const [x1, x2, colour, fx, ...title] = line.split(' ');
  return `<div class="clip ${colour}" ${place(+x1, +x2)}>${title.length ? `<span class="title">${title.join(' ')}</span>` : ''}${fxMark(fx)}</div>`;
}

function audioClip(line, index) {
  const [x1, x2, colour, tag, fx, env, flags] = line.split(' ');
  const has = f => flags.includes(f), w = x2 - x1;
  let inner = '';
  if (has('w')) {
    inner = `<span class="glyph" style="left:55px">${icon('wave', 14, 12)}</span><span class="badge">${index ? 'R' : 'L'}</span><i class="spike" style="left:82px"></i><i class="base"></i>`;
  } else {
    inner = wave(env, w);
    if (tag !== '-' || has('t')) inner += `<span class="tag">${tag}</span>`;
  }
  const vol = colour === 'o' ? 36 : has('h') ? 21 : 29;
  inner += `<i class="vol" style="top:${vol}px"></i>`;
  for (const [f, cls] of [['l', 'left'], ['r', 'right'], ['L', 'wide left'], ['R', 'wide right'], ['X', 'wide fade right']])
    if (has(f)) inner += `<i class="edge ${cls}"></i>`;
  if (has('b')) inner += '<span class="badge">L</span>';
  if (has('n')) inner += `<span class="glyph" style="left:${w - 48}px">${icon('leaf', 12, 13)}</span>`;
  if (has('k')) inner += '<i class="stem" style="left:11px;top:34px;height:16px"></i><i class="key" style="left:8px;top:26px"></i><i class="key" style="left:8px;top:46px"></i>';
  if (has('q')) inner += '<i class="key" style="left:8px;top:31px"></i>';
  if (has('K')) for (const [kx, ky] of [[0, 20], [14, 20], [0, 28], [14, 28]]) inner += `<i class="key" style="left:${kx}px;top:${ky}px"></i>`;
  return `<div class="clip ${colour}${has('s') ? ' picked' : ''}" ${place(+x1, +x2)}>${inner}${fxMark(fx)}</div>`;
}

const button = (cls, label, body) => `<button class="${cls}" aria-label="${label}">${body}</button>`;

document.getElementById('video').innerHTML = Object.entries(VIDEO).map(([name, clips]) => `
  <div class="track"><div class="heads">
    ${button('lock', 'Lock ' + name, icon('lock', 12, 12))}
    <button class="target${name === 'V3' ? ' on' : ''}">${name}</button>
    ${button('', 'Sync lock ' + name, icon('sync', 15, 12))}
    ${button('', 'Show ' + name, icon('eye', 16, 11))}
  </div><div class="lane">${clips.map(videoClip).join('')}</div></div>`).join('');

document.getElementById('audio').innerHTML = AUDIO.map((clips, i) => `
  <div class="track"><div class="heads">
    ${button('lock', 'Lock A' + (i + 1), icon('lock', 12, 14))}
    <button class="target${i < 6 ? ' on' : ''}">A${i + 1}</button>
    <div class="info"><div class="row">
      ${button('', 'Sync lock', icon('sync', 15, 12))}
      <button class="ms">M</button><button class="ms">S</button>
      ${button('', 'Record', icon('mic', 12, 17))}
    </div><div class="name">Audio ${i + 1}</div></div>
  </div><div class="lane">${clips.map(c => audioClip(c, i)).join('')}</div></div>`).join('');

// Sequence ruler: a tick per second, a label every fifteen.
let scale = `<em style="width:${pct(1548)}"></em>`;
for (let i = 0; i < 131; i++) {
  const x = 10.2 + i * 12.007, major = i % 15 === 8;
  scale += `<b${major ? ' class="major"' : ''} style="left:${pct(x)}"></b>`;
  if (major) {
    const s = i - 8, mm = String(Math.floor(s / 60)).padStart(2, '0'), ss = String(s % 60).padStart(2, '0');
    scale += `<span style="left:${pct(x + 2)}">01:${mm}:${ss}:00</span>`;
  }
}
document.getElementById('ruler').innerHTML = scale;
document.getElementById('playhead').style.left = pct(249);

let ticks = '';
for (let i = 0; i < 155; i++) ticks += `<b${i % 15 === 3 ? ' class="major"' : ''} style="left:${pct(1 + i * 7.513, 1159)}"></b>`;
document.getElementById('program-ruler').insertAdjacentHTML('afterbegin', ticks);
```
